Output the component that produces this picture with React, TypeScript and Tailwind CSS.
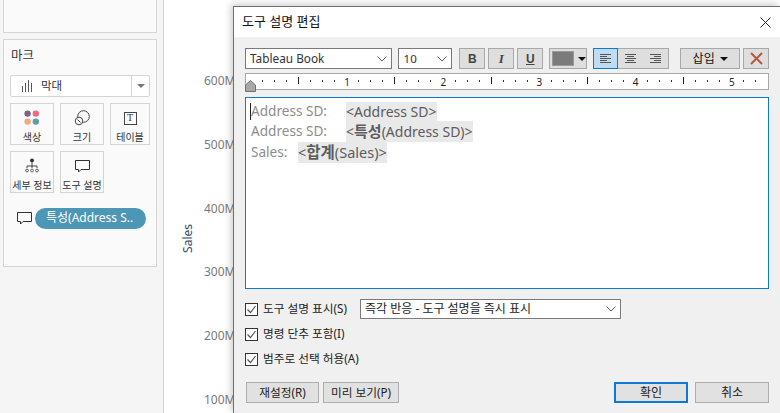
import React from 'react';

const FONT = "font-['Noto_Sans','Noto_Sans_CJK_KR',sans-serif]";

const Chevron: React.FC<{ className?: string }> = ({ className }) => (
  <svg viewBox="0 0 10 6" className={`w-[10px] h-[6px] ${className ?? ''}`}>
    <path d="M0.5 0.5 L5 5 L9.5 0.5" stroke="#606060" strokeWidth="1" fill="none" />
  </svg>
);

const Check: React.FC = () => (
  <div className="w-[13px] h-[13px] border border-[#333] bg-white flex items-center justify-center">
    <svg viewBox="0 0 11 11" className="w-[11px] h-[11px]">
      <path d="M1.5 5.5 L4.5 8.5 L9.5 2" stroke="#555" strokeWidth="1.2" fill="none" />
    </svg>
  </div>
);

const MarkCard: React.FC<{ label: string; icon: React.ReactNode; className?: string }> = ({ label, icon, className }) => (
  <div className={`h-[42px] border border-[#d4d4d4] flex flex-col items-center ${className ?? 'w-[44px]'}`}>
    <div className="h-[26px] flex items-center justify-center mt-[1px]">{icon}</div>
    <div className="text-[10px] leading-[12px] text-[#333] whitespace-nowrap">{label}</div>
  </div>
);

const Sidebar: React.FC = () => (
  <div className="w-[164px] h-full shrink-0 bg-[#f5f5f5] border-r border-[#d4d4d4] pl-[3px] pr-[6px] flex flex-col gap-[6px]">
    <div className="h-[33px] bg-[#fafafa] border border-t-0 border-[#d4d4d4]" />
    <div className="h-[228px] bg-[#fafafa] border border-[#d4d4d4] px-[6px]">
      <div className="text-[12.5px] leading-[16px] text-[#333] mt-[8px] ml-[1px]">마크</div>
      <div className="mt-[11px] h-[22px] w-[140px] bg-white border border-[#d4d4d4] rounded-[2px] flex items-center">
        <svg viewBox="0 0 12 12" className="w-[12px] h-[12px] ml-[10px]">
          <path d="M1.5 12V6 M4.5 12V3 M7.5 12V0 M10.5 12V3" stroke="#555" strokeWidth="1" fill="none" />
        </svg>
        <span className="text-[11.5px] text-[#333] ml-[8px] flex-1">막대</span>
        <div className="w-[18px] h-full border-l border-[#d4d4d4] flex items-center justify-center">
          <div className="w-0 h-0 border-x-[4px] border-x-transparent border-t-[4px] border-t-[#777]" />
        </div>
      </div>
      <div className="mt-[6px] flex gap-[6px]">
        <MarkCard label="색상" icon={
          <svg viewBox="0 0 16 16" className="w-[16px] h-[16px]">
            <circle cx="3.6" cy="3.6" r="3.2" fill="#7b6394" />
            <circle cx="11.8" cy="3.6" r="3.2" fill="#f0697d" />
            <circle cx="3.6" cy="11.6" r="3.2" fill="#f4a77c" />
            <circle cx="11.8" cy="11.6" r="3.2" fill="#5f9ca8" />
          </svg>
        } />
        <MarkCard label="크기" icon={
          <svg viewBox="0 0 16 16" className="w-[16px] h-[16px]">
            <circle cx="9.5" cy="6.5" r="5.8" stroke="#444" strokeWidth="1" fill="none" />
            <circle cx="5" cy="11" r="3.8" stroke="#444" strokeWidth="1" fill="#fafafa" />
            <path d="M3.4 9.5 L6.6 12.5" stroke="#444" strokeWidth="1" />
          </svg>
        } />
        <MarkCard label="테이블" className="w-[40px]" icon={
          <div className="w-[13px] h-[13px] border border-[#444] flex items-center justify-center font-['Liberation_Serif',serif] text-[10px] leading-none text-[#333]">T</div>
        } />
      </div>
      <div className="mt-[6px] flex gap-[6px]">
        <MarkCard label="세부 정보" icon={
          <svg viewBox="0 0 14 16" className="w-[14px] h-[16px]">
            <circle cx="7" cy="2.5" r="2" fill="#333" />
            <path d="M7 4.5V10 M2 10V8 H12 V10" stroke="#444" strokeWidth="1" fill="none" />
            <circle cx="2" cy="12.5" r="1.4" stroke="#444" strokeWidth="0.8" fill="none" />
            <circle cx="7" cy="12.5" r="1.4" stroke="#444" strokeWidth="0.8" fill="none" />
            <circle cx="12" cy="12.5" r="1.4" stroke="#444" strokeWidth="0.8" fill="none" />
          </svg>
        } />
        <MarkCard label="도구 설명" icon={
          <svg viewBox="0 0 15 13" className="w-[15px] h-[13px]">
            <path d="M0.5 0.5H14.5V9.5H6L3.5 12V9.5H0.5Z" stroke="#333" strokeWidth="1" fill="none" />
          </svg>
        } />
      </div>
      <div className="mt-[15px] flex items-center">
        <svg viewBox="0 0 15 13" className="w-[15px] h-[13px] ml-[7px]">
          <path d="M0.5 0.5H14.5V9.5H6L3.5 12V9.5H0.5Z" stroke="#333" strokeWidth="1" fill="none" />
        </svg>
        <div className="ml-[3px] h-[21px] w-[111px] rounded-full bg-[#4b97b5] text-white text-[12px] leading-[20px] pl-[11px] whitespace-nowrap">
          특성(Address S..
        </div>
      </div>
    </div>
  </div>
);

const Axis: React.FC = () => (
  <div className="flex-1 h-full bg-white flex">
    <div className="ml-[24px] w-[12px] flex items-start">
      <span className="mt-[224px] -ml-[7px] block [writing-mode:vertical-rl] rotate-180 text-[12px] leading-[14px] text-[#33496b]">Sales</span>
    </div>
    <div className="ml-[4px] pt-[73px] flex flex-col gap-[47.8px] text-[12px] leading-[16px] text-[#7a7a7a]">
      {['600M', '500M', '400M', '300M', '200M', '100M'].map(t => <div key={t}>{t}</div>)}
    </div>
  </div>
);

const ToolBtn: React.FC<{ className?: string; children: React.ReactNode }> = ({ className, children }) => (
  <div className={`h-[21px] bg-[#dedede] border border-[#a8a8a8] flex items-center justify-center ${className ?? ''}`}>{children}</div>
);

const Ruler: React.FC = () => {
  // 96 px to the inch, ticks every 12 px
  const ticks = Array.from({ length: 43 }, (_, i) => i);
  return (
    <div className="mt-[4px] h-[17px] bg-white border border-[#a8a8a8] relative">
      <svg width="522" height="15" className="block">
        {ticks.map(i => {
          const x = Math.round(4 + i * 12.03) + 0.5;
          if (i % 8 === 0) return null;
          if (i % 4 === 0) return <path key={i} d={`M${x} 3V10`} stroke="#222" strokeWidth="1" />;
          return <path key={i} d={`M${x} 6V8`} stroke="#333" strokeWidth="1" />;
        })}
      </svg>
      {[1, 2, 3, 4, 5].map(n => (
        <span key={n} className="absolute top-[2px] text-[10px] leading-[13px] text-[#222]" style={{ left: n * 96.2 + 2 }}>{n}</span>
      ))}
      <svg viewBox="0 0 11 12" className="absolute -left-[1px] top-[6px] w-[11px] h-[12px]">
        <path d="M0.5 11.5V5L5.5 0.5L10.5 5V11.5Z" fill="#a8a8a8" stroke="#707070" strokeWidth="1" />
      </svg>
    </div>
  );
};

const FieldToken: React.FC<{ children: React.ReactNode }> = ({ children }) => (
  <span className="bg-[#e9e9e9] text-[#5c5c5c] text-[14px] flex items-center whitespace-nowrap">{children}</span>
);

const AlignIcon: React.FC<{ d: string }> = ({ d }) => (
  <svg viewBox="0 0 11 9" className="w-[11px] h-[9px]"><path d={d} stroke="#555" strokeWidth="1" fill="none" /></svg>
);

const Dialog: React.FC = () => (
  <div className="absolute left-[233px] top-[6px] w-[547px] h-[407px] bg-[#f0f0f0] border-t border-l border-[#707070] shadow-[-2px_-2px_7px_rgba(0,0,0,0.2)] flex flex-col">
    <div className="h-[30px] bg-white shrink-0 flex items-center justify-between pl-[8px] pr-[9px]">
      <span className="text-[13px] text-[#111]">도구 설명 편집</span>
      <svg viewBox="0 0 11 11" className="w-[11px] h-[11px]"><path d="M0.5 0.5L10.5 10.5M10.5 0.5L0.5 10.5" stroke="#222" strokeWidth="1" /></svg>
    </div>
    <div className="pl-[11px] pr-[11px] pt-[11px] flex-1 flex flex-col relative">
      <div className="flex items-center h-[21px]">
        <div className="w-[147px] h-[21px] bg-white border border-[#7a7a7a] flex items-center justify-between pl-[4px] pr-[4px] text-[11.8px] text-[#333]">
          Tableau Book <Chevron />
        </div>
        <div className="ml-[6px] w-[55px] h-[21px] bg-white border border-[#7a7a7a] flex items-center justify-between pl-[5px] pr-[4px] text-[11.5px] text-[#333]">
          10 <Chevron />
        </div>
        <ToolBtn className="ml-[7px] w-[26px] font-['Liberation_Sans',sans-serif] font-bold text-[12px] text-[#444]">B</ToolBtn>
        <ToolBtn className="ml-[3px] w-[26px] font-['Liberation_Serif',serif] font-bold italic text-[13px] text-[#444]">I</ToolBtn>
        <ToolBtn className="ml-[3px] w-[26px] font-['Liberation_Sans',sans-serif] font-bold text-[12px] text-[#444] underline">U</ToolBtn>
        <ToolBtn className="ml-[6px] w-[38px] gap-[4px] justify-start pl-[2px]">
          <div className="w-[22px] h-[15px] bg-[#7b7b7b] border border-[#9a9a9a]" />
          <div className="w-0 h-0 border-x-[4px] border-x-transparent border-t-[4px] border-t-[#111]" />
        </ToolBtn>
        <div className="ml-[6px] flex h-[21px] w-[76px] bg-[#dedede] border border-[#a8a8a8]">
          <div className="w-[25px] -my-[1px] -ml-[1px] h-[21px] bg-[#bfdcf3] border border-[#0f78d4] flex items-center justify-center">
            <AlignIcon d="M0 .5H11M0 2.5H7M0 4.5H11M0 6.5H7M0 8.5H11" />
          </div>
          <div className="w-[25px] flex items-center justify-center"><AlignIcon d="M0 .5H11M2 2.5H9M0 4.5H11M2 6.5H9M0 8.5H11" /></div>
          <div className="w-[25px] flex items-center justify-center"><AlignIcon d="M0 .5H11M4 2.5H11M0 4.5H11M4 6.5H11M0 8.5H11" /></div>
        </div>
        <ToolBtn className="ml-[11px] w-[60px] gap-[5px] text-[12px] text-[#111]">
          삽입 <div className="w-0 h-0 border-x-[4px] border-x-transparent border-t-[4px] border-t-[#111]" />
        </ToolBtn>
        <ToolBtn className="ml-[3px] w-[26px]">
          <svg viewBox="0 0 13 13" className="w-[13px] h-[13px]"><path d="M1 1L12 12M12 1L1 12" stroke="#b8573f" strokeWidth="2" /></svg>
        </ToolBtn>
      </div>
      <Ruler />
      <div className="mt-[7px] h-[192px] bg-white border border-[#0f78d4] pl-[5px] pt-[4px] text-[13.6px] text-[#8c8c8c] flex flex-col relative">
        <div className="absolute left-[4px] top-[5px] w-px h-[17px] bg-[#222]" />
        <div className="flex h-[19px]"><span className="w-[95px] flex items-center">Address SD:</span><FieldToken>&lt;Address SD&gt;</FieldToken></div>
        <div className="flex h-[21px]"><span className="w-[95px] flex items-center">Address SD:</span><FieldToken>&lt;<b className="font-bold text-[15px]">특성</b>(Address SD)&gt;</FieldToken></div>
        <div className="flex h-[21px]"><span className="w-[47px] flex items-center">Sales:</span><span className="bg-[#e9e9e9] text-[#5c5c5c] text-[14.5px] flex items-center whitespace-nowrap">&lt;<b className="font-bold text-[15.5px]">합계</b>(Sales)&gt;</span></div>
      </div>
      <div className="mt-[10px] h-[20px] flex items-center text-[11.7px] text-[#222]">
        <Check />
        <span className="ml-[5px] w-[97px]">도구 설명 표시(S)</span>
        <div className="w-[261px] h-[20px] bg-white border border-[#7a7a7a] flex items-center justify-between pl-[4px] pr-[4px] text-[12px]">
          즉각 반응 - 도구 설명을 즉시 표시 <Chevron />
        </div>
      </div>
      <div className="mt-[5px] h-[20px] flex items-center text-[11.7px] text-[#222]"><Check /><span className="ml-[5px]">명령 단추 포함(I)</span></div>
      <div className="mt-[5px] h-[20px] flex items-center text-[11.7px] text-[#222]"><Check /><span className="ml-[5px]">범주로 선택 허용(A)</span></div>
      <div className="mt-[13px] flex items-center text-[11.7px] text-[#222]">
        <div className="ml-[1px] w-[73px] h-[21px] bg-[#e1e1e1] border border-[#adadad] flex items-center justify-center">재설정(R)</div>
        <div className="ml-[4px] w-[76px] h-[21px] bg-[#e1e1e1] border border-[#adadad] flex items-center justify-center">미리 보기(P)</div>
        <div className="ml-[215px] w-[74px] h-[21px] bg-[#e1e1e1] border-2 border-[#0f78d4] flex items-center justify-center text-[12px]">확인</div>
        <div className="ml-[7px] w-[74px] h-[21px] bg-[#e1e1e1] border border-[#adadad] flex items-center justify-center text-[12px]">취소</div>
      </div>
    </div>
  </div>
);

export default function App() {
  return (
    <div className={`relative w-[780px] h-[413px] overflow-hidden flex bg-white ${FONT}`}>
      <Sidebar />
      <Axis />
      <Dialog />
    </div>
  );
}
